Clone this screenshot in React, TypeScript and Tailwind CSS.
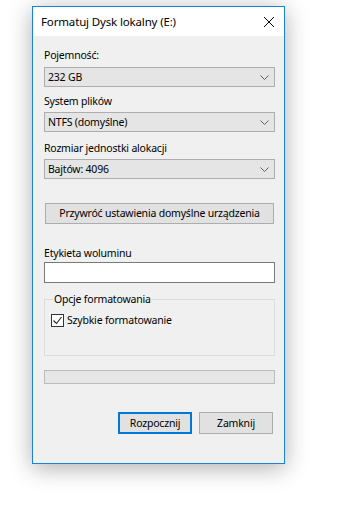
const font = { fontFamily: '"Segoe UI", "Noto Sans", sans-serif' };

function Chevron() {
  return (
    <svg width="9" height="5" viewBox="0 0 9 5" className="shrink-0">
      <path d="M0.5 0.5 L4.5 4.5 L8.5 0.5" fill="none" stroke="#606060" strokeWidth="1" />
    </svg>
  );
}

function Combo({ value, top }: { value: string; top: string }) {
  return (
    <div
      className={`${top} flex h-[20px] w-[231px] items-center justify-between border border-[#adadad] bg-[#e5e5e5] pl-[3px] pr-[5px] text-[10.5px] leading-none tracking-[-0.2px] text-black`}
    >
      <span>{value}</span>
      <Chevron />
    </div>
  );
}

function Label({ text, top }: { text: string; top: string }) {
  return (
    <div className={`${top} h-[15px] text-[10.5px] leading-[15px] tracking-[-0.2px] text-black`}>{text}</div>
  );
}

export default function App() {
  return (
    <div className="min-h-[508px] w-[339px] bg-white pl-[32px] pt-[6px]" style={font}>
      <div className="flex h-[458px] w-[253px] flex-col border border-[#1883d7] bg-[#f0f0f0] shadow-[0_4px_22px_rgba(0,0,0,0.32)]">
        <div className="flex h-[29px] items-center justify-between bg-white pl-[8px] pr-[10px]">
          <span className="text-[11.5px] tracking-[-0.15px] text-black">Formatuj Dysk lokalny (E:)</span>
          <svg width="10" height="10" viewBox="0 0 10 10">
            <path d="M0 0 L10 10 M10 0 L0 10" stroke="#000" strokeWidth="1" />
          </svg>
        </div>

        <div className="flex flex-col pl-[11px] text-[10.5px] tracking-[-0.2px]">
          <Label text="Pojemność:" top="mt-[12px]" />
          <Combo value="232 GB" top="mt-[4px]" />
          <Label text="System plików" top="mt-[7px]" />
          <Combo value="NTFS (domyślne)" top="mt-[3px]" />
          <Label text="Rozmiar jednostki alokacji" top="mt-[9px]" />
          <Combo value="Bajtów: 4096" top="mt-[3px]" />

          <button className="ml-[1px] mt-[24px] h-[21px] w-[229px] whitespace-nowrap border border-[#adadad] bg-[#e1e1e1] leading-none text-black">
            Przywróć ustawienia domyślne urządzenia
          </button>

          <Label text="Etykieta woluminu" top="mt-[22px]" />
          <div className="mt-[1px] h-[21px] w-[231px] border border-[#7a7a7a] bg-white" />

          <fieldset className="mt-[9px] h-[64px] w-[231px] border border-[#dcdcdc] pl-[6px]">
            <legend className="ml-[2px] h-[15px] px-[1px] leading-[15px] text-black">Opcje formatowania</legend>
            <div className="mt-[7px] flex items-center gap-[3px]">
              <div className="flex h-[13px] w-[13px] items-center justify-center border border-[#333333] bg-white">
                <svg width="11" height="11" viewBox="0 0 11 11">
                  <path d="M1.5 5.5 L4.5 8.5 L9.5 2" fill="none" stroke="#222" strokeWidth="1.1" />
                </svg>
              </div>
              <span className="leading-[13px] text-black">Szybkie formatowanie</span>
            </div>
          </fieldset>

          <div className="mt-[14px] h-[14px] w-[231px] border border-[#bcbcbc] bg-[#e6e6e6]" />

          <div className="ml-[74px] mt-[28px] flex gap-[7px]">
            <button className="h-[22px] w-[74px] border-2 border-[#0078d7] bg-[#e1e1e1] leading-none text-black">
              Rozpocznij
            </button>
            <button className="h-[22px] w-[74px] border border-[#adadad] bg-[#e1e1e1] leading-none text-black">
              Zamknij
            </button>
          </div>
        </div>
      </div>
    </div>
  );
}
